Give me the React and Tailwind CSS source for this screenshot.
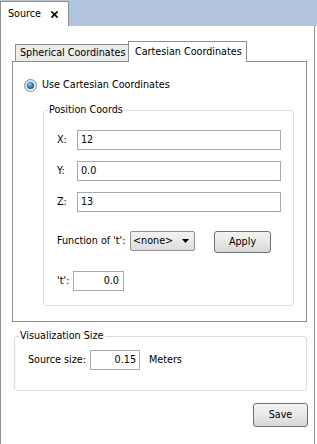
import React from "react";

const font = { fontFamily: '"DejaVu Sans Condensed", "Liberation Sans", sans-serif' };

function CloseIcon() {
  return (
    <svg width="7" height="7" viewBox="0 0 7 7" className="block">
      <path d="M1 1 L6 6 M6 1 L1 6" stroke="#000" strokeWidth="1.7" strokeLinecap="square" />
    </svg>
  );
}

function Radio() {
  return (
    <svg width="13" height="13" viewBox="0 0 13 13" className="block shrink-0">
      <defs>
        <radialGradient id="dot" cx="0.4" cy="0.35" r="0.7">
          <stop offset="0" stopColor="#8fd3fb" />
          <stop offset="0.5" stopColor="#2a8ad4" />
          <stop offset="1" stopColor="#0b4f93" />
        </radialGradient>
        <linearGradient id="ring" x1="0" y1="0" x2="1" y2="1">
          <stop offset="0" stopColor="#d0d4da" />
          <stop offset="1" stopColor="#f6f6f6" />
        </linearGradient>
      </defs>
      <circle cx="6.5" cy="6.5" r="6" fill="url(#ring)" stroke="#8a8d92" strokeWidth="1" />
      <circle cx="6.5" cy="6.5" r="3.6" fill="url(#dot)" />
    </svg>
  );
}

function TextBox({ value, className = "", right = false }) {
  return (
    <div
      className={`h-[20px] border border-[#a6a9ae] bg-white flex items-center px-[3px] ${right ? "justify-end" : ""} ${className}`}
    >
      {value}
    </div>
  );
}

function Button({ label, className = "" }) {
  return (
    <div
      className={`border border-[#707070] rounded-[3px] bg-linear-to-b from-[#f3f3f3] via-[#e9e9e9] to-[#d6d6d6] flex items-center justify-center ${className}`}
    >
      {label}
    </div>
  );
}

function Group({ title, className = "", children }) {
  return (
    <fieldset className={`border border-[#d5dde3] rounded-[3px] p-0 m-0 min-w-0 ${className}`}>
      <legend className="ml-[4px] px-[1px] leading-[14px]">{title}</legend>
      {children}
    </fieldset>
  );
}

export default function App() {
  return (
    <div className="w-[317px] h-[444px] bg-white flex flex-col text-[10.7px] text-black whitespace-nowrap" style={font}>
      <div className="flex items-end h-[26px] shrink-0 bg-[#b2c5de]">
        <div className="w-[69px] h-[25px] bg-white border-l border-t border-r border-[#8e8f8f] flex items-center pl-[7px]">
          <span className="w-[43px]">Source</span>
          <CloseIcon />
        </div>
      </div>

      <div className="flex-1 w-[315px] border-l border-r border-[#8e8f8f] pt-[15px] flex flex-col">
        <div className="flex items-end h-[20px] ml-[14px]">
          <div className="w-[113px] h-[17px] bg-[#ebebeb] border-l border-t border-[#8e8f8f] flex items-center pl-[4px] overflow-hidden">
            Spherical Coordinates
          </div>
          <div className="relative z-10 w-[119px] h-[21px] -mb-px bg-white border-l border-t border-r border-[#8e8f8f] flex items-center pl-[6px]">
            Cartesian Coordinates
          </div>
        </div>

        <div className="ml-[11px] w-[295px] border border-[#8e8f8f] pt-[16px] pb-[15px] flex flex-col">
          <div className="flex items-center h-[14px] pl-[11px] gap-[5px]">
            <Radio />
            <span>Use Cartesian Coordinates</span>
          </div>

          <Group title="Position Coords" className="ml-[30px] w-[251px] mt-[11px]">
            <div className="pt-[13px] pb-[14px] pl-[13px] pr-[12px] flex flex-col">
              <div className="flex flex-col gap-[11px]">
                <div className="flex items-center">
                  <span className="w-[20px]">X:</span>
                  <TextBox value="12" className="flex-1" />
                </div>
                <div className="flex items-center">
                  <span className="w-[20px]">Y:</span>
                  <TextBox value="0.0" className="flex-1" />
                </div>
                <div className="flex items-center">
                  <span className="w-[20px]">Z:</span>
                  <TextBox value="13" className="flex-1" />
                </div>
              </div>

              <div className="flex items-start mt-[19px] h-[22px]">
                <span className="w-[73px] h-[20px] flex items-center">Function of 't':</span>
                <div className="w-[65px] h-[20px] border border-[#8e8f8f] rounded-[2px] bg-linear-to-b from-[#f2f2f2] to-[#dedede] flex items-center pl-[2px]">
                  <span>&lt;none&gt;</span>
                  <svg width="7" height="4" viewBox="0 0 7 4" className="ml-auto mr-[5px] block">
                    <path d="M0 0 H7 L3.5 4 Z" fill="#000" />
                  </svg>
                </div>
                <Button label="Apply" className="ml-[19px] w-[57px] h-[22px]" />
              </div>

              <div className="flex items-center mt-[18px]">
                <span className="w-[16px]">'t':</span>
                <TextBox value="0.0" right className="w-[51px] pr-[4px]" />
              </div>
            </div>
          </Group>
        </div>

        <Group title="Visualization Size" className="ml-[13px] w-[293px] mt-[7px]">
          <div className="pt-[7px] pb-[20px] pl-[13px] flex items-center">
            <span className="w-[62px]">Source size:</span>
            <TextBox value="0.15" right className="w-[50px] pr-[3px]" />
            <span className="ml-[9px]">Meters</span>
          </div>
        </Group>

        <div className="flex justify-end pr-[6px] mt-[12px]">
          <Button label="Save" className="w-[55px] h-[24px]" />
        </div>
      </div>
    </div>
  );
}
